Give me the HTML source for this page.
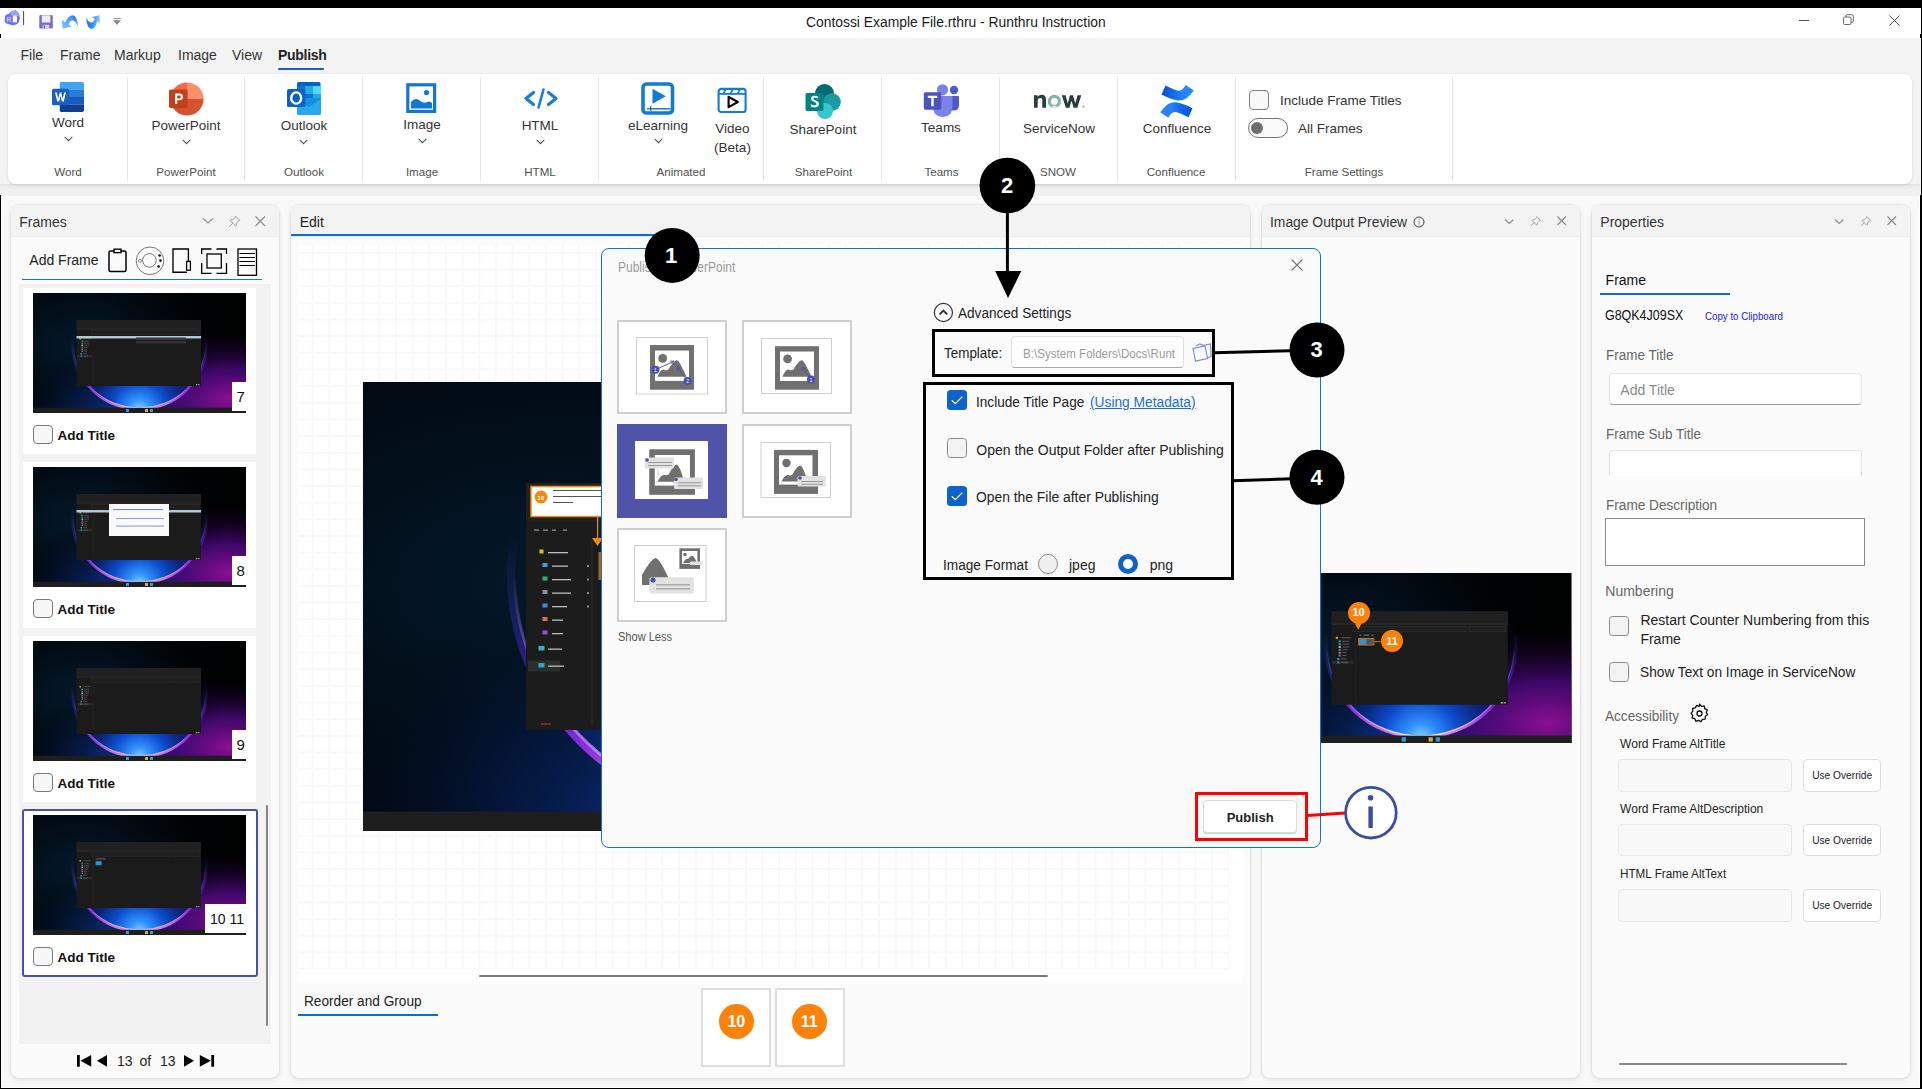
<!DOCTYPE html>
<html><head><meta charset="utf-8">
<style>
*{box-sizing:border-box;margin:0;padding:0}
html,body{width:1922px;height:1089px;overflow:hidden;background:#f9f9f9;font-family:"Liberation Sans",sans-serif;color:#222}
.a{position:absolute}
.t{position:absolute;white-space:nowrap;line-height:1}
svg{position:absolute;overflow:visible}
.panel{position:absolute;background:#fbfbfb;border-radius:8px;box-shadow:0 0 0 0.6px rgba(0,0,0,.06),0 0 4px rgba(0,0,0,.07),0 3px 6px rgba(0,0,0,.06)}
.phdr{position:absolute;left:0;top:0;right:0;height:32px;background:#f3f3f3;border-radius:8px 8px 0 0;border-bottom:1px solid #ebebeb}
.sep{position:absolute;top:77px;width:1px;height:104px;background:#e6e6e6}
.rl{position:absolute;font-size:13.5px;color:#333;white-space:nowrap;line-height:1;text-align:center}
.gl{position:absolute;font-size:11.6px;color:#505050;white-space:nowrap;line-height:1;text-align:center}
.chev{position:absolute;width:7px;height:7px;border-right:1.3px solid #666;border-bottom:1.3px solid #666;transform:rotate(45deg)}
</style></head><body>
<!-- window frame -->
<div class="a" style="left:0;top:0;width:1922px;height:8px;background:#000"></div>
<div class="a" style="left:0;top:8px;width:1922px;height:30px;background:#fff"></div>
<div class="a" style="left:0;top:38px;width:1922px;height:157px;background:#f3f3f3"></div>
<div class="a" style="left:0;top:184px;width:1922px;height:11.5px;background:linear-gradient(#e3e3e3,#ececec 3px,#f0f0f0 6px,#f1f1f1)"></div>
<div class="a" style="left:1px;top:195px;width:1px;height:892px;background:#fff"></div>
<div class="a" style="left:1919px;top:195px;width:1px;height:892px;background:#fff"></div>
<div class="a" style="left:0;top:1087px;width:1922px;height:1px;background:#fff"></div>
<div class="a" style="left:0;top:195px;width:1px;height:894px;background:#000"></div>
<div class="a" style="left:0;top:34px;width:1px;height:4px;background:#000"></div>
<div class="a" style="left:1921px;top:8px;width:1px;height:1081px;background:#000"></div>
<div class="a" style="left:1920px;top:195px;width:1px;height:894px;background:#000"></div>
<div class="a" style="left:1920px;top:34px;width:1px;height:4px;background:#000"></div>
<div class="a" style="left:0;top:1088px;width:1922px;height:1px;background:#000"></div>

<!-- title -->
<div class="t" style="left:806px;top:15px;font-size:14px;color:#1a1a1a;transform:scaleX(0.99);transform-origin:0 0">Contossi Example File.rthru - Runthru Instruction</div>

<!-- menu -->
<div class="t" style="left:20.5px;top:48px;font-size:14px;color:#333">File</div>
<div class="t" style="left:60px;top:48px;font-size:14px;color:#333">Frame</div>
<div class="t" style="left:114px;top:48px;font-size:14px;color:#333">Markup</div>
<div class="t" style="left:178px;top:48px;font-size:14px;color:#333">Image</div>
<div class="t" style="left:232px;top:48px;font-size:14px;color:#333">View</div>
<div class="t" style="left:278px;top:48px;font-size:14px;color:#222;font-weight:bold;letter-spacing:-0.3px">Publish</div>
<div class="a" style="left:278px;top:67.5px;width:46px;height:2.5px;border-radius:2px;background:#1a5fc0"></div>

<!-- ribbon -->
<div class="a" style="left:8px;top:74px;width:1904px;height:110px;background:#fff;border-radius:8px;box-shadow:0 1px 3px rgba(0,0,0,.12)"></div>
<div class="sep" style="left:127px"></div>
<div class="sep" style="left:244px"></div>
<div class="sep" style="left:362px"></div>
<div class="sep" style="left:480px"></div>
<div class="sep" style="left:598px"></div>
<div class="sep" style="left:763px"></div>
<div class="sep" style="left:881px"></div>
<div class="sep" style="left:999px"></div>
<div class="sep" style="left:1117px"></div>
<div class="sep" style="left:1235px"></div>
<div class="sep" style="left:1452px"></div>

<!-- title bar icons -->
<svg style="left:0;top:8px" width="130" height="30" viewBox="0 8 130 30">
  <defs>
   <linearGradient id="ur" x1="0" y1="1" x2="1" y2="0"><stop offset="0" stop-color="#8cc4ff"/><stop offset="0.6" stop-color="#4aa0ff"/><stop offset="1" stop-color="#1a70e0"/></linearGradient>
   <linearGradient id="rr" x1="0" y1="0" x2="1" y2="0"><stop offset="0" stop-color="#1a70e0"/><stop offset="0.5" stop-color="#3a90f8"/><stop offset="1" stop-color="#90c8ff"/></linearGradient>
  </defs>
  <path d="M5 18.5 Q4 14.5 8.5 14 Q10.5 11 15.5 10.2 Q19.5 12.5 19.8 17.5 Q20 23 16 24.6 Q12.5 25.8 10 24.5 Q5.5 24 4.5 21Z" fill="#6c72f6"/>
  <path d="M9.5 14 Q12 11 15.5 10.2 Q18.5 12 19 16 L13 16Z" fill="#9aa2ff"/>
  <text x="6.6" y="21.8" font-size="6.8" font-family="Liberation Sans" font-weight="bold" fill="#c8ccff">R</text>
  <path d="M12.8 15.5 H16 L17 16.6 V22.3 H12.8Z" fill="#fff"/>
  <rect x="23" y="11" width="1.1" height="14" fill="#555"/>
  <rect x="39.3" y="15" width="13.5" height="13.6" rx="1.3" fill="#7a6cc8"/>
  <rect x="41.8" y="15.3" width="8.6" height="7.2" fill="#ececec"/>
  <rect x="42.6" y="24.8" width="6.6" height="3.8" fill="#d8d8d8"/>
  <rect x="43.6" y="25.3" width="1.4" height="3" fill="#6a5cb8"/>
  <path d="M62.5 28.8 L62 19.8 L65.2 22.3 Q68.5 15.3 72.5 15.2 Q77.5 15.5 77.8 26.6 Q75.5 19.5 71.8 20.5 Q69.6 21.2 68.4 24.6 L71.5 26.4Z" fill="url(#ur)"/>
  <path d="M86.2 17.3 Q86.8 29.5 92 28.7 Q95.5 28.3 97.3 21.2 L99.8 23.5 L99.6 14.9 L91.8 17.3 L94.7 18.5 Q93.5 22.3 91.3 22.5 Q88.3 22.6 86.2 17.3Z" fill="url(#rr)"/>
  <rect x="113" y="18" width="7.8" height="0.9" fill="#999"/>
  <path d="M113 20.2 H120.8 L116.9 25Z" fill="#888"/>
</svg>
<!-- window controls -->
<div class="a" style="left:1799px;top:20px;width:10px;height:1px;background:#555"></div>
<svg style="left:1843px;top:14px" width="12" height="12" viewBox="0 0 12 12"><rect x="0.5" y="3" width="7.5" height="7.5" rx="1.2" fill="none" stroke="#666" stroke-width="1"/><path d="M2.8 3 V2.2 Q2.8 0.7 4.3 0.7 H8.8 Q10.3 0.7 10.3 2.2 V6.8 Q10.3 8.2 8.2 8.2" fill="none" stroke="#666" stroke-width="1"/></svg>
<svg style="left:1889px;top:15px" width="11" height="11" viewBox="0 0 11 11"><path d="M0.5 0.5 L10.5 10.5 M10.5 0.5 L0.5 10.5" stroke="#555" stroke-width="1"/></svg>

<!-- Word -->
<svg style="left:52px;top:82px" width="33" height="31" viewBox="0 0 33 31">
  <defs><clipPath id="wc"><rect x="7.5" y="0" width="24.5" height="30" rx="1.8"/></clipPath></defs>
  <g clip-path="url(#wc)">
   <rect x="7.5" y="0" width="25" height="7.6" fill="#41a5ee"/>
   <rect x="7.5" y="7.5" width="25" height="7.6" fill="#2b7cd3"/>
   <rect x="7.5" y="15" width="25" height="7.6" fill="#185abd"/>
   <rect x="7.5" y="22.5" width="25" height="8" fill="#103f91"/>
  </g>
  <rect x="0" y="6.8" width="17" height="16.5" rx="1.6" fill="#1b5fc1"/>
  <path d="M3 10.5 L5.3 19.5 L7.2 19.5 L8.5 13.8 L9.8 19.5 L11.7 19.5 L14 10.5 L12.2 10.5 L10.7 16.8 L9.3 10.5 L7.7 10.5 L6.3 16.8 L4.8 10.5Z" fill="#fff"/>
</svg>
<div class="rl" style="left:38px;top:115.6px;width:60px">Word</div>
<svg style="left:63.5px;top:136.0px" width="9" height="6" viewBox="0 0 9 6"><path d="M0.7 0.8 L4.5 4.6 L8.3 0.8" fill="none" stroke="#555" stroke-width="1.15"/></svg>
<div class="gl" style="left:28px;top:166px;width:80px">Word</div>

<!-- PowerPoint -->
<svg style="left:169px;top:81.5px" width="36" height="34" viewBox="0 0 36 34">
  <path d="M18 17 L18 0.4 A16.6 16.6 0 0 1 34.6 17Z" fill="#ff8f6b"/>
  <path d="M18 17 L18 0.4 A16.6 16.6 0 0 0 1.4 17Z" fill="#ed6c47"/>
  <path d="M1.4 17 A16.6 16.6 0 0 0 34.6 17Z" fill="#d35230"/>
  <rect x="0" y="7.5" width="18.6" height="18.4" rx="1.6" fill="#c43e1c"/>
  <path d="M6 11.5 H10.3 Q14 11.5 14 14.8 Q14 18.3 10.3 18.3 H8.2 V22 H6Z M8.2 13.4 V16.4 H10.2 Q11.8 16.4 11.8 14.9 Q11.8 13.4 10.2 13.4Z" fill="#fff" fill-rule="evenodd"/>
</svg>
<div class="rl" style="left:145px;top:118.5px;width:82px">PowerPoint</div>
<svg style="left:181.5px;top:138.5px" width="9" height="6" viewBox="0 0 9 6"><path d="M0.7 0.8 L4.5 4.6 L8.3 0.8" fill="none" stroke="#555" stroke-width="1.15"/></svg>
<div class="gl" style="left:136px;top:166px;width:100px">PowerPoint</div>

<!-- Outlook -->
<svg style="left:287px;top:82px" width="36" height="34" viewBox="0 0 36 34">
  <rect x="10" y="0" width="23.5" height="9" rx="1.5" fill="#0364b8"/>
  <rect x="10" y="4" width="8" height="8" fill="#0078d4"/>
  <rect x="18" y="4" width="8" height="8" fill="#28a8ea"/>
  <rect x="26" y="4" width="8" height="8" fill="#50d9ff"/>
  <rect x="10" y="12" width="8" height="8" fill="#0364b8"/>
  <rect x="18" y="12" width="8" height="8" fill="#0078d4"/>
  <rect x="26" y="12" width="8" height="8" fill="#28a8ea"/>
  <path d="M10 16 L34 16 L34 31 Q34 33 32 33 L12 33 Q10 33 10 31Z" fill="#1490df"/>
  <path d="M10 17 L22 25 L34 17 L34 31 Q34 33 32 33 L12 33 Q10 33 10 31Z" fill="#28a8ea"/>
  <rect x="0" y="7" width="18.5" height="18" rx="1.6" fill="#0a64bd"/>
  <ellipse cx="9.2" cy="16" rx="5" ry="5.6" fill="none" stroke="#fff" stroke-width="2.4"/>
</svg>
<div class="rl" style="left:263px;top:118.5px;width:82px">Outlook</div>
<svg style="left:299.0px;top:138.5px" width="9" height="6" viewBox="0 0 9 6"><path d="M0.7 0.8 L4.5 4.6 L8.3 0.8" fill="none" stroke="#555" stroke-width="1.15"/></svg>
<div class="gl" style="left:254px;top:166px;width:100px">Outlook</div>

<!-- Image -->
<svg style="left:406px;top:83px" width="32" height="31" viewBox="0 0 32 31">
  <rect x="1.8" y="1.8" width="26.8" height="26.6" fill="none" stroke="#0f78d4" stroke-width="3.2"/>
  <circle cx="20.5" cy="9.5" r="2.6" fill="#0f78d4"/>
  <path d="M5 25.5 L5 19 Q9 14 13 17 Q17 21 21 19 Q24 17.5 26 20 L26 25.5Z" fill="#0f78d4"/>
</svg>
<div class="rl" style="left:381px;top:118px;width:82px">Image</div>
<svg style="left:417.5px;top:137.5px" width="9" height="6" viewBox="0 0 9 6"><path d="M0.7 0.8 L4.5 4.6 L8.3 0.8" fill="none" stroke="#555" stroke-width="1.15"/></svg>
<div class="gl" style="left:372px;top:166px;width:100px">Image</div>

<!-- HTML -->
<svg style="left:524px;top:88px" width="34" height="22" viewBox="0 0 34 22">
  <path d="M9.5 4.5 L2 10.5 L9.5 16.5" fill="none" stroke="#1a7bd8" stroke-width="3.2" stroke-linejoin="round" stroke-linecap="round"/>
  <path d="M24.5 4.5 L32 10.5 L24.5 16.5" fill="none" stroke="#1a7bd8" stroke-width="3.2" stroke-linejoin="round" stroke-linecap="round"/>
  <path d="M19.5 1.5 L14.5 19.5" fill="none" stroke="#1a7bd8" stroke-width="2.6" stroke-linecap="round"/>
</svg>
<div class="rl" style="left:499px;top:119px;width:82px">HTML</div>
<svg style="left:535.5px;top:138.5px" width="9" height="6" viewBox="0 0 9 6"><path d="M0.7 0.8 L4.5 4.6 L8.3 0.8" fill="none" stroke="#555" stroke-width="1.15"/></svg>
<div class="gl" style="left:490px;top:166px;width:100px">HTML</div>

<!-- eLearning -->
<svg style="left:641px;top:82px" width="35" height="34" viewBox="0 0 35 34">
  <rect x="2" y="2" width="29.5" height="29" rx="3.5" fill="none" stroke="#137ad6" stroke-width="3.6"/>
  <path d="M11.5 6.8 L11.5 21.8 L24.8 14.3Z" fill="#137ad6"/>
  <rect x="6" y="26" width="23.5" height="1.5" fill="#137ad6"/>
  <rect x="9" y="24.2" width="1.4" height="5" fill="#137ad6"/>
</svg>
<div class="rl" style="left:617px;top:119px;width:82px">eLearning</div>
<svg style="left:653.5px;top:138.0px" width="9" height="6" viewBox="0 0 9 6"><path d="M0.7 0.8 L4.5 4.6 L8.3 0.8" fill="none" stroke="#555" stroke-width="1.15"/></svg>
<!-- Video -->
<svg style="left:717px;top:87px" width="31" height="27" viewBox="0 0 31 27">
  <rect x="1.6" y="1.9" width="27" height="23.1" rx="2.6" fill="none" stroke="#137ad6" stroke-width="2.1"/>
  <path d="M1.6 6.9 H28.6" stroke="#137ad6" stroke-width="1.8"/>
  <path d="M6.3 6.9 L9 1.9 M13.4 6.9 L16.1 1.9 M20.6 6.9 L23.3 1.9" stroke="#137ad6" stroke-width="1.7"/>
  <path d="M11.6 9.8 L11.6 20.2 L20.9 15Z" fill="none" stroke="#000" stroke-width="2.1" stroke-linejoin="round"/>
</svg>
<div class="t" style="left:712px;top:118.5px;font-size:13.5px;color:#333;line-height:19px;text-align:center;width:41px">Video<br>(Beta)</div>
<div class="gl" style="left:631px;top:166px;width:100px">Animated</div>

<!-- SharePoint -->
<svg style="left:805px;top:84px" width="37" height="36" viewBox="0 0 37 36">
  <circle cx="19.5" cy="9.5" r="9.5" fill="#036c70"/>
  <circle cx="27" cy="18" r="8.8" fill="#1a9ba1"/>
  <circle cx="20" cy="27" r="8" fill="#37c6d0"/>
  <rect x="0.5" y="9" width="18" height="18" rx="1.6" fill="#038387"/>
  <path d="M13.2 12.8 Q11.8 11.8 9.6 11.8 Q6 11.8 6 14.8 Q6 16.8 9 17.8 Q11.5 18.6 11.5 19.9 Q11.5 21.3 9.4 21.3 Q7.2 21.3 5.8 20 V22.6 Q7.2 23.4 9.4 23.4 Q13.9 23.4 13.9 19.8 Q13.9 17.6 10.6 16.6 Q8.4 15.9 8.4 14.7 Q8.4 13.8 9.9 13.8 Q11.8 13.8 13.2 14.8Z" fill="#fff"/>
</svg>
<div class="rl" style="left:772px;top:122.5px;width:102px">SharePoint</div>
<div class="gl" style="left:773.5px;top:166px;width:100px">SharePoint</div>

<!-- Teams -->
<svg style="left:923px;top:84px" width="37" height="34" viewBox="0 0 37 34">
  <circle cx="31" cy="6" r="4.2" fill="#5059c9"/>
  <path d="M26 12 H35 Q36 12 36 13 V21 Q36 26.5 30.5 26.5 Q26 26.5 26 21Z" fill="#5059c9"/>
  <circle cx="19.5" cy="5.8" r="5.6" fill="#7b83eb"/>
  <path d="M10 12 H28 Q29.5 12 29.5 13.5 V22.5 Q29.5 33 19.8 33 Q10 33 10 22.5Z" fill="#7b83eb"/>
  <rect x="0.8" y="8.2" width="17.5" height="17.5" rx="1.6" fill="#4b53bc"/>
  <path d="M4.8 11.8 H14.2 V13.9 H10.7 V22.3 H8.3 V13.9 H4.8Z" fill="#fff"/>
</svg>
<div class="rl" style="left:900px;top:120.5px;width:82px">Teams</div>
<div class="gl" style="left:891.5px;top:166px;width:100px">Teams</div>

<!-- ServiceNow -->
<svg style="left:1033px;top:92px" width="53" height="17" viewBox="0 0 53 17">
  <path d="M1 15.8 V3.2 H4.6 V4.8 Q6.2 2.8 8.8 2.8 Q13 2.8 13 7.6 V15.8 H9.3 V8.3 Q9.3 6 7.3 6 Q4.7 6 4.7 8.8 V15.8Z" fill="#293e40"/>
  <circle cx="21.4" cy="9.4" r="5" fill="none" stroke="#81b5a1" stroke-width="3.3"/>
  <path d="M18 15.5 Q21.4 12 24.8 15.5" fill="#fff"/>
  <path d="M28.8 3.2 H32.5 L34.8 11.3 L37 3.2 H40 L42.3 11.3 L44.6 3.2 H48.3 L44.3 15.8 H40.6 L38.5 8.8 L36.4 15.8 H32.8Z" fill="#293e40"/>
  <circle cx="50.5" cy="14.6" r="1.1" fill="#81b5a1"/>
</svg>
<div class="rl" style="left:1008px;top:121.6px;width:102px">ServiceNow</div>
<div class="gl" style="left:1008px;top:166px;width:100px">SNOW</div>

<!-- Confluence -->
<svg style="left:1159px;top:84px" width="36" height="35" viewBox="0 0 36 35">
  <defs>
   <linearGradient id="cf1" x1="0" y1="0" x2="1" y2="0"><stop offset="0" stop-color="#0050d0"/><stop offset="0.7" stop-color="#2684ff"/></linearGradient>
   <linearGradient id="cf2" x1="1" y1="0" x2="0" y2="0"><stop offset="0" stop-color="#0050d0"/><stop offset="0.7" stop-color="#2684ff"/></linearGradient>
  </defs>
  <path d="M6.5 1.5 L2.5 10.6 Q12 15.5 19.3 16.6 Q24 16.8 27.3 14.6 Q31 11.5 34.8 6.5 L26.7 1.1 Q23.5 6.5 20.5 6.8 Q17.5 7 6.5 1.5Z" fill="url(#cf1)"/>
  <path d="M29.5 33.3 L33.5 24.2 Q24 19.3 16.7 18.2 Q12 18 8.7 20.2 Q5 23.3 1.2 28.3 L9.3 33.7 Q12.5 28.3 15.5 28 Q18.5 27.8 29.5 33.3Z" fill="url(#cf2)"/>
</svg>
<div class="rl" style="left:1126px;top:121.6px;width:102px">Confluence</div>
<div class="gl" style="left:1126px;top:166px;width:100px">Confluence</div>

<!-- Frame settings -->
<div class="a" style="left:1249px;top:90px;width:20px;height:20px;border:1px solid #808080;border-radius:4px;background:#f8f8f8"></div>
<div class="t" style="left:1280px;top:93.6px;font-size:13.5px;color:#333">Include Frame Titles</div>
<div class="a" style="left:1248px;top:118px;width:40px;height:20px;border:1px solid #777;border-radius:10px;background:#fafafa"></div>
<div class="a" style="left:1251px;top:122px;width:12px;height:12px;border-radius:6px;background:#6e6e6e"></div>
<div class="t" style="left:1298px;top:121.6px;font-size:13.5px;color:#333">All Frames</div>
<div class="gl" style="left:1294px;top:166px;width:100px">Frame Settings</div>


<!-- panels -->
<div class="panel" style="left:11px;top:205px;width:268px;height:873px"><div class="phdr"></div></div>
<div class="panel" style="left:291px;top:205px;width:959px;height:873px"><div class="phdr"></div></div>
<div class="panel" style="left:1262px;top:205px;width:318px;height:873px"><div class="phdr"></div></div>
<div class="panel" style="left:1592px;top:205px;width:318px;height:873px"><div class="phdr"></div></div>

<svg width="0" height="0" style="position:absolute">
 <defs>
  <radialGradient id="bgL" cx="0.25" cy="0.45" r="0.7"><stop offset="0" stop-color="#04192a"/><stop offset="0.6" stop-color="#020c16"/><stop offset="1" stop-color="#01060b"/></radialGradient>
  <linearGradient id="darkR" x1="0" y1="0" x2="1" y2="0.2"><stop offset="0.35" stop-color="#000" stop-opacity="0"/><stop offset="0.9" stop-color="#000" stop-opacity="0.9"/></linearGradient>
  <radialGradient id="bgR" cx="0.92" cy="0.88" r="0.6"><stop offset="0" stop-color="#8a1090"/><stop offset="0.4" stop-color="#48087a" stop-opacity="0.85"/><stop offset="1" stop-color="#000" stop-opacity="0"/></radialGradient>
  <radialGradient id="blo" cx="0.5" cy="1" r="0.8"><stop offset="0" stop-color="#80d0ff"/><stop offset="0.1" stop-color="#3090ff"/><stop offset="0.25" stop-color="#0c4ccc"/><stop offset="0.42" stop-color="#08267a" stop-opacity="0.85"/><stop offset="0.7" stop-color="#041434" stop-opacity="0.35"/><stop offset="1" stop-color="#031020" stop-opacity="0"/></radialGradient>
  <linearGradient id="rim" x1="0" y1="0" x2="0" y2="1"><stop offset="0.42" stop-color="#2a40c0" stop-opacity="0"/><stop offset="0.68" stop-color="#5028e0" stop-opacity="0.55"/><stop offset="0.86" stop-color="#9a30f0"/><stop offset="1" stop-color="#ff90e0"/></linearGradient><linearGradient id="rim2" x1="0" y1="0" x2="0" y2="1"><stop offset="0.5" stop-color="#fff" stop-opacity="0"/><stop offset="0.85" stop-color="#e0a0ff" stop-opacity="0.6"/><stop offset="1" stop-color="#fff0ff"/></linearGradient><radialGradient id="bgB" cx="0.5" cy="1" r="0.6"><stop offset="0.2" stop-color="#0c3aa0" stop-opacity="0.8"/><stop offset="0.6" stop-color="#062060" stop-opacity="0.4"/><stop offset="1" stop-color="#000" stop-opacity="0"/></radialGradient>
  <symbol id="thumb" viewBox="0 0 213 120" preserveAspectRatio="none">
   <rect width="213" height="120" fill="url(#bgL)"/>
   <rect width="213" height="120" fill="url(#darkR)"/>
   <rect width="213" height="120" fill="url(#bgB)"/>
   <rect width="213" height="120" fill="url(#bgR)"/>
   <ellipse cx="106.5" cy="51.5" rx="67" ry="64.5" fill="url(#blo)"/>
   <ellipse cx="106.5" cy="51.5" rx="67" ry="64.5" fill="none" stroke="url(#rim)" stroke-width="2.2" opacity="0.9"/>
   <ellipse cx="106.5" cy="51.5" rx="66" ry="63.5" fill="none" stroke="url(#rim2)" stroke-width="0.8"/>
   <rect x="43.5" y="27" width="124.5" height="66" fill="#1b1b1b"/>
   <rect x="43.5" y="27" width="124.5" height="9" fill="#202020"/>
   <rect x="43.5" y="35.8" width="124.5" height="0.5" fill="#3a3a3a"/>
   <rect x="58.5" y="37.6" width="80" height="3.6" fill="#1f1f1f" stroke="#333" stroke-width="0.4"/>
   <rect x="140.5" y="37.6" width="26" height="3.6" fill="#1f1f1f" stroke="#333" stroke-width="0.4"/>
   <rect x="60" y="43" width="0.4" height="48" fill="#2a2a2a"/>
   <g opacity="0.85"><rect x="46.5" y="45" width="1.5" height="1.5" fill="#e8b820"/><rect x="48.5" y="47.5" width="1.5" height="1.5" fill="#3aa0e0"/><rect x="48.5" y="49.5" width="1.5" height="1.5" fill="#30b070"/><rect x="48.5" y="51.5" width="1.5" height="1.5" fill="#ccc"/><rect x="48.5" y="53.5" width="1.5" height="1.5" fill="#3a90e0"/><rect x="48.5" y="55.5" width="1.5" height="1.5" fill="#e07060"/><rect x="48.5" y="57.5" width="1.5" height="1.5" fill="#a060e0"/><rect x="47.5" y="60" width="1.5" height="1.5" fill="#30b0e0"/><rect x="44" y="62" width="15" height="2.4" fill="#2c2c2c"/><rect x="47.5" y="62.4" width="1.5" height="1.5" fill="#30a0d0"/></g>
   <g fill="#6a6a6a" opacity="0.7"><rect x="50.5" y="45.3" width="7" height="0.8"/><rect x="51" y="47.8" width="5" height="0.8"/><rect x="51" y="49.8" width="5" height="0.8"/><rect x="51" y="51.8" width="5" height="0.8"/><rect x="51" y="53.8" width="4" height="0.8"/><rect x="51" y="55.8" width="3" height="0.8"/><rect x="51" y="57.8" width="3" height="0.8"/><rect x="50" y="60.3" width="4" height="0.8"/><rect x="50" y="62.7" width="5" height="0.8"/></g>
   <rect x="165" y="91" width="1.6" height="1.2" fill="#888"/><rect x="163" y="91" width="1.4" height="1.2" fill="#aaa"/>
   <rect x="0" y="114.8" width="213" height="5.2" fill="#1e1e1e"/>
   <rect x="93" y="116" width="3" height="3" fill="#2a9af0"/><rect x="112" y="116" width="3" height="3" fill="#d0b040"/><rect x="117" y="116" width="3" height="3" fill="#30a0d0"/>
  </symbol>
 </defs>
</svg>
<!-- Frames header -->
<div class="t" style="left:19.3px;top:215.4px;font-size:14px;color:#333">Frames</div>
<svg style="left:202px;top:217px" width="12" height="8" viewBox="0 0 12 8"><path d="M1 1.5 L6 6 L11 1.5" fill="none" stroke="#8a8a8a" stroke-width="1.1"/></svg>
<svg style="left:228px;top:215px" width="13" height="13" viewBox="0 0 13 13"><path d="M7.5 1.2 L11.8 5.5 L10.6 6 L8.2 8.4 L8.3 10.4 L7.5 11 L2 5.5 L2.6 4.7 L4.6 4.8 L7 2.4Z M4.8 8.2 L1.3 11.7" fill="none" stroke="#9a9a9a" stroke-width="1"/></svg>
<svg style="left:255px;top:216px" width="11" height="11" viewBox="0 0 11 11"><path d="M0.5 0.5 L10 10 M10 0.5 L0.5 10" stroke="#8a8a8a" stroke-width="1.1"/></svg>
<!-- add frame row -->
<div class="t" style="left:29.3px;top:253px;font-size:14px;color:#222">Add Frame</div>
<svg style="left:100px;top:240px" width="170" height="45" viewBox="100 240 170 45">
 <rect x="109" y="251" width="17" height="20.5" rx="1.6" fill="none" stroke="#000" stroke-width="1.5"/>
 <rect x="114" y="249.2" width="7" height="3.4" fill="#fff" stroke="#000" stroke-width="1.4"/>
 <circle cx="150" cy="260.8" r="13.8" fill="none" stroke="#777" stroke-width="1"/>
 <circle cx="149.4" cy="260.4" r="6.8" fill="none" stroke="#777" stroke-width="1"/>
 <circle cx="140" cy="260.8" r="1.5" fill="none" stroke="#777" stroke-width="0.9"/>
 <circle cx="159.6" cy="255.5" r="1.3" fill="#111"/><circle cx="160.5" cy="260.6" r="1.3" fill="#111"/><circle cx="158.6" cy="266.5" r="1.3" fill="#111"/>
 <path d="M188.4 261.5 V249 H173 V272.2 H187" fill="none" stroke="#000" stroke-width="1.35"/>
 <rect x="186.6" y="261.4" width="3.8" height="8.8" fill="#fff" stroke="#000" stroke-width="1.3"/>
 <path d="M201.7 254 V249 H211.5 M216.5 249 H226.5 V254 M226.5 263 V273.3 H216.5 M211.5 273.3 H201.7 V263" fill="none" stroke="#000" stroke-width="1.3"/>
 <rect x="207" y="254" width="14.3" height="14" fill="none" stroke="#000" stroke-width="1.3"/>
 <rect x="238" y="249" width="18.5" height="26.3" fill="none" stroke="#000" stroke-width="1.3"/>
 <path d="M239.5 253.5 H255 M239.5 257.5 H255 M239.5 261.5 H255 M239.5 265.5 H255" stroke="#000" stroke-width="1.1"/>
</svg>
<div class="a" style="left:22px;top:278.6px;width:240px;height:1.6px;background:#1a73d0"></div>
<!-- list area -->
<div class="a" style="left:19px;top:284px;width:252px;height:760px;background:#f2f2f2"></div>
<div class="a" style="left:23px;top:288px;width:233px;height:166px;background:#fff"></div>
<div class="a" style="left:23px;top:462px;width:233px;height:166px;background:#fff"></div>
<div class="a" style="left:23px;top:636px;width:233px;height:166px;background:#fff"></div>
<div class="a" style="left:22px;top:809px;width:235.5px;height:168px;background:#fff;border:2px solid #4a4fa8;border-radius:3px"></div>
<svg style="left:33px;top:293px" width="213" height="120"><use href="#thumb"/></svg>
<svg style="left:33px;top:467px" width="213" height="120"><use href="#thumb"/><rect x="43.5" y="43" width="124.5" height="2.5" fill="#b0c8d8"/><rect x="76" y="37" width="60" height="32" fill="#fafafa"/><rect x="80" y="42" width="50" height="1.1" fill="#6a8ad0"/><rect x="83" y="51" width="48" height="1.1" fill="#8aa0d8"/><rect x="83" y="58.5" width="48" height="1.1" fill="#8aa0d8"/></svg>
<svg style="left:33px;top:641px" width="213" height="120"><use href="#thumb"/></svg>
<svg style="left:33px;top:815px" width="213" height="120"><use href="#thumb"/><rect x="62.6" y="46.2" width="6" height="4" fill="#2a90d8"/><rect x="62.6" y="43.5" width="10" height="0.8" fill="#777"/></svg>
<svg style="left:33px;top:293px" width="213" height="120"><rect x="43.5" y="43" width="124.5" height="2.5" fill="#b0c8d8"/><rect x="103" y="44.5" width="50" height="2.5" fill="#3a3a3a"/><rect x="103" y="48" width="50" height="2.5" fill="#333"/></svg>
<div class="a" style="left:232px;top:382px;width:14px;height:29px;background:#fff"></div>
<div class="t" style="left:236.5px;top:388.8px;font-size:15px;color:#111">7</div>
<div class="a" style="left:232px;top:556px;width:14px;height:29px;background:#fff"></div>
<div class="t" style="left:236.5px;top:562.8px;font-size:15px;color:#111">8</div>
<div class="a" style="left:232px;top:730px;width:14px;height:29px;background:#fff"></div>
<div class="t" style="left:236.5px;top:736.8px;font-size:15px;color:#111">9</div>
<div class="a" style="left:205px;top:904px;width:41px;height:29px;background:#fff"></div>
<div class="t" style="left:210px;top:912px;font-size:14px;color:#111">10 11</div>
<!-- checkboxes / titles -->
<div class="a" style="left:33px;top:424.5px;width:20px;height:19.5px;border:1px solid #7a7a7a;border-radius:4px;background:#f7f7f7"></div>
<div class="t" style="left:57.5px;top:428.8px;font-size:13.5px;color:#111;font-weight:bold">Add Title</div>
<div class="a" style="left:33px;top:598.5px;width:20px;height:19.5px;border:1px solid #7a7a7a;border-radius:4px;background:#f7f7f7"></div>
<div class="t" style="left:57.5px;top:602.8px;font-size:13.5px;color:#111;font-weight:bold">Add Title</div>
<div class="a" style="left:33px;top:772.5px;width:20px;height:19.5px;border:1px solid #7a7a7a;border-radius:4px;background:#f7f7f7"></div>
<div class="t" style="left:57.5px;top:776.8px;font-size:13.5px;color:#111;font-weight:bold">Add Title</div>
<div class="a" style="left:33px;top:946.5px;width:20px;height:19.5px;border:1px solid #7a7a7a;border-radius:4px;background:#f7f7f7"></div>
<div class="t" style="left:57.5px;top:950.8px;font-size:13.5px;color:#111;font-weight:bold">Add Title</div>
<div class="a" style="left:266px;top:805px;width:2.2px;height:221px;background:#858585;border-radius:1px"></div>
<!-- pager -->
<svg style="left:76px;top:1054px" width="140" height="14" viewBox="76 1054 140 14">
 <rect x="77" y="1055" width="2.8" height="11.7" fill="#000"/><path d="M91.2 1055 V1066.7 L80.5 1060.8Z" fill="#000"/>
 <path d="M107 1055 V1066.7 L97 1060.8Z" fill="#000"/>
 <path d="M184 1055 V1066.7 L194 1060.8Z" fill="#000"/>
 <path d="M199.8 1055 V1066.7 L210.8 1060.8Z" fill="#000"/><rect x="211.3" y="1055" width="2.8" height="11.7" fill="#000"/>
</svg>
<div class="t" style="left:117px;top:1054.2px;font-size:14px;color:#222">13</div>
<div class="t" style="left:139.5px;top:1054.2px;font-size:14px;color:#222">of</div>
<div class="t" style="left:160px;top:1054.2px;font-size:14px;color:#222">13</div>

<!-- FRAMES_CONTENT -->
<!-- Edit panel -->
<div class="t" style="left:299.7px;top:215.2px;font-size:14px;color:#222">Edit</div>
<div class="a" style="left:291px;top:234px;width:370px;height:2.2px;background:#0f6cd0"></div>
<div class="a" style="left:298px;top:245px;width:945px;height:737.6px;background:#fff"></div><div class="a" style="left:298px;top:245px;width:931px;height:724px;background-image:linear-gradient(90deg,transparent 14px,#f8f8f8 14px,#f8f8f8 15.7px,transparent 15.7px),linear-gradient(transparent 7px,#f8f8f8 7px,#f8f8f8 8.7px,transparent 8.7px);background-size:16.67px 16.67px,16.67px 16.67px"></div>
<svg style="left:363px;top:382px" width="798" height="449"><use href="#thumb"/></svg>
<!-- edit image overlay details -->
<svg style="left:363px;top:382px" width="240" height="449" viewBox="363 382 240 449">
 <rect x="526.5" y="483.5" width="80" height="246.5" fill="#1c1c1c"/>
 <rect x="526.5" y="483.5" width="80" height="38" fill="#202020"/>
 <rect x="591.5" y="540" width="1" height="185" fill="#2e2e2e"/>
 <rect x="528" y="660.5" width="32" height="11" fill="#2d2d2d"/>
 <g fill="#9a9a9a"><rect x="534" y="529.5" width="5" height="1.2"/><rect x="543" y="529.5" width="5" height="1.2"/><rect x="552" y="529.5" width="4" height="1.2"/><rect x="563" y="529.5" width="4" height="1.2"/></g>
 <g fill="#bdbdbd"><rect x="548" y="552" width="20" height="1.3"/><rect x="552" y="565.5" width="16" height="1.3"/><rect x="552" y="579" width="19" height="1.3"/><rect x="552" y="592.5" width="19" height="1.3"/><rect x="552" y="606" width="15" height="1.3"/><rect x="552" y="619.5" width="11" height="1.3"/><rect x="552" y="633" width="11" height="1.3"/><rect x="548" y="648.5" width="14" height="1.3"/><rect x="548" y="665.5" width="16" height="1.3"/></g>
 <g><rect x="539.5" y="549.5" width="4" height="4" fill="#e8b820"/><rect x="542.5" y="563" width="5" height="4" fill="#3aa0e0"/><rect x="542.5" y="576.5" width="5" height="4" fill="#30b070"/><rect x="542.5" y="590" width="5" height="4" fill="#8a8a9a"/><rect x="542.5" y="603.5" width="5" height="4" fill="#3a90e0"/><rect x="542.5" y="617" width="5" height="4" fill="#e07050"/><rect x="542.5" y="630.5" width="5" height="4" fill="#9050e0"/><rect x="538.5" y="646" width="6" height="4.5" fill="#30b0e0"/><rect x="538.5" y="663" width="6" height="4.5" fill="#30a0d0"/></g>
 <g fill="#888"><rect x="587" y="565" width="2" height="2"/><rect x="587" y="578.5" width="2" height="2"/><rect x="587" y="592" width="2" height="2"/><rect x="587" y="605.5" width="2" height="2"/></g>
 <rect x="531" y="486.5" width="75" height="30" fill="#fff" stroke="#f08a10" stroke-width="1.5"/>
 <circle cx="541" cy="497" r="6.5" fill="#f08a10"/>
 <text x="537.3" y="499.5" font-size="6" font-family="Liberation Sans" font-weight="bold" fill="#fff">10</text>
 <g fill="#555"><rect x="553" y="490" width="48" height="1"/><rect x="553" y="496" width="48" height="1"/><rect x="553" y="502" width="20" height="1"/></g>
 <rect x="597" y="517" width="1.2" height="22" fill="#f08a10"/>
 <path d="M592 538 L603 538 L597.5 546Z" fill="#f08a10"/>
 <rect x="598.5" y="552" width="3" height="28" fill="#f08a10" opacity="0.7"/>
 <rect x="541" y="723.5" width="10" height="1" fill="#c04040"/>
</svg>
<div class="a" style="left:479px;top:974.8px;width:568.5px;height:2.2px;background:#7a7a7a;border-radius:1px"></div>
<div class="t" style="left:303.5px;top:994.2px;font-size:14px;color:#222;transform:scaleX(0.975);transform-origin:0 0">Reorder and Group</div>
<div class="a" style="left:298px;top:1014px;width:140px;height:2px;background:#0f6cd0"></div>
<div class="a" style="left:700.5px;top:987.5px;width:70px;height:79px;background:#fff;border:2px solid #dedede"></div>
<div class="a" style="left:774.5px;top:987.5px;width:70.5px;height:79px;background:#fff;border:2px solid #dedede"></div>
<div class="a" style="left:718.5px;top:1003.8px;width:35.6px;height:35.6px;border-radius:50%;background:#fd820a"></div>
<div class="a" style="left:791.5px;top:1003.8px;width:35.6px;height:35.6px;border-radius:50%;background:#fd820a"></div>
<div class="t" style="left:718.5px;top:1013.6px;width:35.6px;text-align:center;font-size:16px;font-weight:bold;color:#fff;letter-spacing:0">10</div>
<div class="t" style="left:791.5px;top:1013.6px;width:35.6px;text-align:center;font-size:16px;font-weight:bold;color:#fff;letter-spacing:0">11</div>

<!-- EDIT_CONTENT -->
<!-- PREVIEW_CONTENT -->
<!-- Image Output Preview -->
<div class="t" style="left:1270.3px;top:215.4px;font-size:14px;color:#333;transform:scaleX(0.99);transform-origin:0 0">Image Output Preview</div>
<svg style="left:1412px;top:215px" width="14" height="14" viewBox="0 0 14 14"><circle cx="7" cy="7" r="5" fill="none" stroke="#444" stroke-width="1"/><rect x="6.5" y="6" width="1.1" height="3.6" fill="#999"/><rect x="6.5" y="4.2" width="1.1" height="1" fill="#999"/></svg>
<svg style="left:1504px;top:217.5px" width="11" height="7" viewBox="0 0 11 7"><path d="M1 1.5 L5.2 5.5 L9.4 1.5" fill="none" stroke="#8a8a8a" stroke-width="1.1"/></svg>
<svg style="left:1529.5px;top:215.5px" width="12" height="10" viewBox="0 0 12 10"><path d="M6.8 0.6 L10.6 4.4 L9.6 4.8 L7.4 7 L7.5 8.7 L6.8 9.3 L2 4.5 L2.6 3.8 L4.3 3.9 L6.5 1.7Z M4.2 6.8 L1 9.8" fill="none" stroke="#9a9a9a" stroke-width="0.9"/></svg>
<svg style="left:1556.5px;top:216px" width="10" height="10" viewBox="0 0 10 10"><path d="M0.5 0.5 L9 9 M9 0.5 L0.5 9" stroke="#8a8a8a" stroke-width="1.1"/></svg>
<svg style="left:1270.4px;top:573px" width="301.6" height="170"><use href="#thumb"/></svg>
<svg style="left:1270.4px;top:573px" width="302" height="170" viewBox="0 0 213 120" preserveAspectRatio="none">
 <rect x="62.6" y="46.2" width="10.6" height="4.6" fill="#2a90d8" stroke="#e07a10" stroke-width="0.7"/>
 <rect x="68" y="46.5" width="5" height="4" fill="#555"/>
 <path d="M73.2 48.5 H80" stroke="#e07a10" stroke-width="0.7"/>
 <rect x="61.9" y="30" width="0.7" height="6" fill="#f7850e"/>
 <path d="M59.8 35.5 L64.7 35.5 L62.25 40Z" fill="#f7850e"/>
 <g fill="#777"><rect x="63" y="43.5" width="1.5" height="0.8"/><rect x="66" y="43.5" width="4" height="0.8"/><rect x="71.5" y="43.5" width="1.5" height="0.8"/></g>
</svg>
<div class="a" style="left:1347.5px;top:601.5px;width:22px;height:22px;border-radius:50%;background:#fd820a"></div>
<div class="t" style="left:1347.5px;top:607px;width:22px;text-align:center;font-size:11px;font-weight:bold;color:#fff">10</div>
<div class="a" style="left:1381px;top:630px;width:22px;height:22px;border-radius:50%;background:#fd820a"></div>
<div class="t" style="left:1381px;top:635.6px;width:22px;text-align:center;font-size:11px;font-weight:bold;color:#fff">11</div>

<!-- Properties -->
<div class="t" style="left:1600.3px;top:215.4px;font-size:14px;color:#333">Properties</div>
<svg style="left:1834px;top:217.5px" width="11" height="7" viewBox="0 0 11 7"><path d="M1 1.5 L5.2 5.5 L9.4 1.5" fill="none" stroke="#8a8a8a" stroke-width="1.1"/></svg>
<svg style="left:1860px;top:215.5px" width="12" height="10" viewBox="0 0 12 10"><path d="M6.8 0.6 L10.6 4.4 L9.6 4.8 L7.4 7 L7.5 8.7 L6.8 9.3 L2 4.5 L2.6 3.8 L4.3 3.9 L6.5 1.7Z M4.2 6.8 L1 9.8" fill="none" stroke="#9a9a9a" stroke-width="0.9"/></svg>
<svg style="left:1886.5px;top:216px" width="10" height="10" viewBox="0 0 10 10"><path d="M0.5 0.5 L9 9 M9 0.5 L0.5 9" stroke="#8a8a8a" stroke-width="1.1"/></svg>
<div class="t" style="left:1605.6px;top:273.4px;font-size:14px;color:#111">Frame</div>
<div class="a" style="left:1600px;top:292.8px;width:130px;height:2.2px;background:#0f6cd0"></div>
<div class="t" style="left:1605.3px;top:308.4px;font-size:14px;color:#111;transform:scaleX(0.89);transform-origin:0 0">G8QK4J09SX</div>
<div class="t" style="left:1704.8px;top:311px;font-size:10.8px;color:#1a22e8;transform:scaleX(0.9);transform-origin:0 0">Copy to Clipboard</div>
<div class="t" style="left:1605.5px;top:348.3px;font-size:14px;color:#666;transform:scaleX(0.964);transform-origin:0 0">Frame Title</div>
<div class="a" style="left:1608.5px;top:372.6px;width:253px;height:32px;background:#fff;border:1px solid #e3e3e3;border-bottom:1px solid #9a9a9a;border-radius:4px"></div>
<div class="t" style="left:1620.3px;top:382.5px;font-size:14px;color:#8a8a8a">Add Title</div>
<div class="t" style="left:1605.5px;top:427.2px;font-size:14px;color:#666;transform:scaleX(0.96);transform-origin:0 0">Frame Sub Title</div>
<div class="a" style="left:1608.5px;top:450.2px;width:253px;height:25.6px;background:#fff;border:1px solid #e3e3e3;border-bottom:none;border-radius:4px 4px 0 0"></div>
<div class="t" style="left:1605.5px;top:497.8px;font-size:14px;color:#666;transform:scaleX(0.972);transform-origin:0 0">Frame Description</div>
<div class="a" style="left:1605px;top:518.4px;width:260px;height:47.6px;background:#fff;border:1px solid #8a8a8a"></div>
<div class="t" style="left:1605.3px;top:583.9px;font-size:14px;color:#666">Numbering</div>
<div class="a" style="left:1609px;top:616.2px;width:20px;height:19.6px;background:#f3f3f3;border:1px solid #8a8a8a;border-radius:3.5px"></div>
<div class="t" style="left:1640.4px;top:611.2px;font-size:14px;color:#222;line-height:18.9px">Restart Counter Numbering from this<br>Frame</div>
<div class="a" style="left:1609px;top:662.2px;width:20px;height:19.4px;background:#f3f3f3;border:1px solid #8a8a8a;border-radius:3.5px"></div>
<div class="t" style="left:1640.4px;top:664.8px;font-size:14px;color:#222;transform:scaleX(0.979);transform-origin:0 0">Show Text on Image in ServiceNow</div>
<div class="t" style="left:1605.3px;top:708.8px;font-size:14px;color:#666;transform:scaleX(0.97);transform-origin:0 0">Accessibility</div>
<svg style="left:1689px;top:703px" width="21" height="21" viewBox="0 0 21 21">
 <path d="M10.6 1.2 L12.4 3.3 L15.2 2.9 L15.7 5.6 L18.3 6.9 L17.2 9.4 L18.6 11.8 L16.3 13.3 L16.2 16.1 L13.5 16.3 L11.9 18.6 L9.5 17.3 L6.9 18.3 L5.8 15.7 L3.1 15 L3.7 12.3 L2 10.1 L3.9 8.1 L3.6 5.4 L6.3 4.8 L7.7 2.4 L10.1 3.5Z" fill="none" stroke="#111" stroke-width="1.3" stroke-linejoin="round"/>
 <circle cx="10.5" cy="10.5" r="2.5" fill="none" stroke="#111" stroke-width="1.3"/>
</svg>
<div class="t" style="left:1620.1px;top:738.3px;font-size:12px;color:#222">Word Frame AltTitle</div>
<div class="a" style="left:1618.2px;top:759.2px;width:173.5px;height:32.6px;background:#f8f8f8;border:1px solid #e6e6e6;border-radius:4px"></div>
<div class="a" style="left:1802.8px;top:759.2px;width:78.7px;height:32.6px;background:#fff;border:1px solid #dedede;border-radius:4px"></div>
<div class="t" style="left:1802.8px;top:771px;width:78.7px;text-align:center;font-size:10.2px;color:#222">Use Override</div>
<div class="t" style="left:1620.1px;top:803.4px;font-size:12px;color:#222">Word Frame AltDescription</div>
<div class="a" style="left:1618.2px;top:824.3px;width:173.5px;height:32.1px;background:#f8f8f8;border:1px solid #e6e6e6;border-radius:4px"></div>
<div class="a" style="left:1802.8px;top:824.3px;width:78.7px;height:32.1px;background:#fff;border:1px solid #dedede;border-radius:4px"></div>
<div class="t" style="left:1802.8px;top:836px;width:78.7px;text-align:center;font-size:10.2px;color:#222">Use Override</div>
<div class="t" style="left:1620.1px;top:868.1px;font-size:12px;color:#222;transform:scaleX(0.975);transform-origin:0 0">HTML Frame AltText</div>
<div class="a" style="left:1618.2px;top:889.4px;width:173.5px;height:32.6px;background:#f8f8f8;border:1px solid #e6e6e6;border-radius:4px"></div>
<div class="a" style="left:1802.8px;top:889.4px;width:78.7px;height:32.6px;background:#fff;border:1px solid #dedede;border-radius:4px"></div>
<div class="t" style="left:1802.8px;top:901px;width:78.7px;text-align:center;font-size:10.2px;color:#222">Use Override</div>
<div class="a" style="left:1619px;top:1063px;width:228px;height:2px;background:#8a8a8a;border-radius:1px"></div>

<!-- PROPS_CONTENT -->
<!-- Dialog -->
<div class="a" style="left:601px;top:248px;width:720px;height:599.5px;background:#fafafa;border:1.3px solid #0676d2;border-radius:8px"></div>
<div class="t" style="left:618.3px;top:260px;font-size:14px;color:#9a9a9a;transform:scaleX(0.857);transform-origin:0 0">Publish to PowerPoint</div>
<svg style="left:1290px;top:258px" width="14" height="14" viewBox="0 0 14 14"><path d="M1.5 1.5 L12.5 12.5 M12.5 1.5 L1.5 12.5" stroke="#777" stroke-width="1.1"/></svg>
<!-- tiles -->
<div class="a" style="left:617px;top:320px;width:110px;height:94px;background:#fff;border:2px solid #cfcfcf"></div>
<div class="a" style="left:742.3px;top:320px;width:109.5px;height:94px;background:#fff;border:2px solid #cfcfcf"></div>
<div class="a" style="left:617px;top:424px;width:110px;height:94px;background:#5054a8"></div>
<div class="a" style="left:742.3px;top:424px;width:109.5px;height:94px;background:#fff;border:2px solid #cfcfcf"></div>
<div class="a" style="left:617px;top:528.4px;width:110px;height:93.5px;background:#fff;border:2px solid #cfcfcf"></div>
<svg style="left:610px;top:320px" width="250" height="305" viewBox="610 320 250 305">
 <g fill="none" stroke="#cfcfcf" stroke-width="1">
  <rect x="636.5" y="337.5" width="71" height="56.5"/>
  <rect x="761.5" y="338.5" width="70" height="55"/>
  <rect x="761" y="442.5" width="69.5" height="55"/>
  <rect x="634.5" y="545.5" width="71.5" height="56"/>
 </g>
 <rect x="635" y="441" width="73" height="58" fill="#fff"/>
 <!-- tile1 picture -->
 <rect x="650" y="345" width="44" height="44.7" fill="#707070"/>
 <rect x="655" y="350.6" width="34" height="30.3" fill="#fff"/>
 <circle cx="662.7" cy="358.4" r="4.4" fill="#707070"/>
 <path d="M657.5 376.8 Q661 368.5 664 369.8 Q666.5 371 668.5 369.5 Q673 361 677 360 Q680 362 686.5 376.8Z" fill="#707070"/>
 <path d="M656 369.5 L673.5 361.5 M674 361 L670 361.2 M674 361 L671.5 364" stroke="#4a4fb0" stroke-width="0.9" fill="none"/>
 <path d="M687 380 L677.5 367.5 M677.2 367 L677.5 370.8 M677.2 367 L680.5 368.6" stroke="#4a4fb0" stroke-width="0.9" fill="none"/>
 <circle cx="655.5" cy="369.8" r="4" fill="#4a4fb0"/><circle cx="687.7" cy="380.9" r="4" fill="#4a4fb0"/>
 <text x="654" y="372" font-size="5" font-family="Liberation Sans" fill="#fff">1</text><text x="686.2" y="383" font-size="5" font-family="Liberation Sans" fill="#fff">2</text>
 <!-- tile2 picture -->
 <rect x="775" y="346.2" width="44" height="43.5" fill="#707070"/>
 <rect x="780" y="351.5" width="34" height="29.5" fill="#fff"/>
 <circle cx="787.6" cy="358.8" r="4.4" fill="#707070"/>
 <path d="M782.5 376.8 Q786 368.5 789 369.8 Q791.5 371 793.5 369.5 Q798 361 802 360 Q805 362 811.5 376.8Z" fill="#707070"/>
 <path d="M811 379.5 L802.5 367.5 M802.2 367 L802.5 370.8 M802.2 367 L805.5 368.6" stroke="#4a4fb0" stroke-width="0.9" fill="none"/>
 <circle cx="811" cy="379.6" r="4" fill="#4a4fb0"/><text x="809.6" y="381.6" font-size="5" font-family="Liberation Sans" fill="#fff">1</text>
 <!-- tile3 -->
 <rect x="649.2" y="449.3" width="45.7" height="45.5" fill="#707070"/>
 <rect x="654.8" y="455" width="35.2" height="30.6" fill="#fff"/>
 <path d="M657.5 481.8 Q661 474 664.5 475 Q667 476 669 474 Q673 465 677 464.5 Q680 466 684 481.8Z" fill="#707070"/>
 <rect x="644.7" y="457.6" width="29.3" height="11" rx="1.5" fill="#e2e2e2"/>
 <rect x="648" y="462" width="24" height="0.7" fill="#777"/><rect x="648" y="465.2" width="24" height="0.7" fill="#777"/>
 <circle cx="647" cy="460" r="1.8" fill="#4a4fb0"/>
 <rect x="674" y="477.5" width="29" height="11.4" rx="1.5" fill="#e2e2e2"/>
 <rect x="678" y="482.5" width="23" height="0.7" fill="#777"/><rect x="678" y="485.5" width="23" height="0.7" fill="#777"/>
 <circle cx="676" cy="479.5" r="1.8" fill="#4a4fb0"/>
 <path d="M658 469 V476" stroke="#aaa" stroke-width="0.6"/>
 <!-- tile4 -->
 <rect x="774" y="449.9" width="44" height="44" fill="#707070"/>
 <rect x="779" y="455.3" width="33.5" height="29.3" fill="#fff"/>
 <circle cx="786.5" cy="463" r="4.2" fill="#707070"/>
 <path d="M781.5 481.5 Q785 474 788 475 Q790.5 476 792.5 474.5 Q796.5 466 800.5 465.5 Q803.5 467 807.5 481.5Z" fill="#707070"/>
 <rect x="797.5" y="476" width="28.2" height="10.5" rx="1.5" fill="#e2e2e2"/>
 <rect x="801" y="481" width="22" height="0.7" fill="#777"/><rect x="801" y="483.8" width="22" height="0.7" fill="#777"/>
 <circle cx="800" cy="478" r="1.8" fill="#4a4fb0"/>
 <!-- tile5 -->
 <path d="M642 585 V575 Q650 560 655.5 558 Q660 559 668 577 L668 585Z" fill="#707070"/>
 <rect x="679.4" y="548.3" width="20.6" height="20.6" fill="#707070"/>
 <rect x="682" y="551" width="15.4" height="13" fill="#fff"/>
 <circle cx="685" cy="554.5" r="1.8" fill="#707070"/>
 <path d="M683 563 Q686 558 688 559 Q691 555 693 556 Q695 558 697 563Z" fill="#707070"/>
 <rect x="690" y="561.5" width="13" height="3.5" rx="0.8" fill="#e2e2e2"/>
 <rect x="649.5" y="577.2" width="44.4" height="16.4" rx="2" fill="#e2e2e2"/>
 <rect x="656" y="584.5" width="34" height="0.8" fill="#777"/><rect x="656" y="588.5" width="34" height="0.8" fill="#777"/>
 <circle cx="653" cy="580" r="2.6" fill="#4a4fb0"/>
</svg>
<div class="t" style="left:618.2px;top:631px;font-size:12px;color:#555;transform:scaleX(0.92);transform-origin:0 0">Show Less</div>

<!-- advanced settings -->
<svg style="left:933px;top:302px" width="21" height="21" viewBox="0 0 21 21"><circle cx="10.4" cy="10.5" r="9.1" fill="none" stroke="#333" stroke-width="1.2"/><path d="M6.6 12.3 L10.4 8.5 L14.2 12.3" fill="none" stroke="#333" stroke-width="1.9"/></svg>
<div class="t" style="left:957.8px;top:306.3px;font-size:14px;color:#222;transform:scaleX(0.97);transform-origin:0 0">Advanced Settings</div>
<div class="a" style="left:932px;top:329px;width:283px;height:48px;border:3px solid #000"></div>
<div class="t" style="left:943.7px;top:345.9px;font-size:14px;color:#222;transform:scaleX(0.96);transform-origin:0 0">Template:</div>
<div class="a" style="left:1010.5px;top:336.4px;width:173px;height:31.2px;background:#fff;border:1px solid #e0e0e0;border-bottom:1px solid #aaa;border-radius:4px"></div>
<div class="t" style="left:1022.5px;top:346.7px;font-size:13px;color:#9a9a9a;transform:scaleX(0.892);transform-origin:0 0">B:\System Folders\Docs\Runt</div>
<svg style="left:1190px;top:341px" width="24" height="22" viewBox="0 0 24 22"><path d="M3 7.5 L15 5 L17.5 17.5 L5.5 20Z" fill="none" stroke="#7a86d0" stroke-width="1.1"/><path d="M6 5 L9.5 3 L12 3.5 L13 4.5 L20.5 3 L21 15.5 L17.5 17" fill="none" stroke="#7a86d0" stroke-width="1.1"/></svg>

<!-- settings box -->
<div class="a" style="left:923px;top:382px;width:310.5px;height:197.5px;border:3px solid #000"></div>
<div class="a" style="left:947px;top:390px;width:20.2px;height:19.8px;background:#0f63c8;border-radius:3.5px"></div>
<svg style="left:947px;top:390px" width="20" height="20" viewBox="0 0 20 20"><path d="M4.8 10.3 L8.3 13.6 L15.3 6.6" fill="none" stroke="#fff" stroke-width="1.2"/></svg>
<div class="t" style="left:976.3px;top:394.8px;font-size:14px;color:#222;transform:scaleX(0.973);transform-origin:0 0">Include Title Page</div>
<div class="t" style="left:1090.1px;top:394.8px;font-size:14px;color:#1a6fd0;text-decoration:underline;transform:scaleX(0.983);transform-origin:0 0">(Using Metadata)</div>
<div class="a" style="left:947px;top:438.4px;width:20.2px;height:19.4px;background:#f3f3f3;border:1px solid #8a8a8a;border-radius:3.5px"></div>
<div class="t" style="left:976.3px;top:442.6px;font-size:14px;color:#222">Open the Output Folder after Publishing</div>
<div class="a" style="left:947px;top:486.1px;width:20.2px;height:19.8px;background:#0f63c8;border-radius:3.5px"></div>
<svg style="left:947px;top:486px" width="20" height="20" viewBox="0 0 20 20"><path d="M4.8 10.3 L8.3 13.6 L15.3 6.6" fill="none" stroke="#fff" stroke-width="1.2"/></svg>
<div class="t" style="left:976.3px;top:490.3px;font-size:14px;color:#222;transform:scaleX(0.99);transform-origin:0 0">Open the File after Publishing</div>
<div class="t" style="left:943.3px;top:558.2px;font-size:14px;color:#222;transform:scaleX(0.975);transform-origin:0 0">Image Format</div>
<div class="a" style="left:1038.2px;top:554px;width:19.8px;height:19.8px;border-radius:50%;background:#f0f0f0;border:1px solid #8a8a8a"></div>
<div class="t" style="left:1069px;top:558.2px;font-size:14px;color:#222">jpeg</div>
<div class="a" style="left:1118px;top:554px;width:19.9px;height:19.9px;border-radius:50%;background:#fff;border:5.2px solid #0f63c8"></div>
<div class="t" style="left:1149.8px;top:558.2px;font-size:14px;color:#222">png</div>

<!-- publish -->
<div class="a" style="left:1203.4px;top:800.3px;width:93.6px;height:33px;background:#fff;border:1px solid #dcdcdc;border-radius:4px;box-shadow:0 1px 0 #cfcfcf"></div>
<div class="t" style="left:1203.4px;top:811px;width:93.6px;text-align:center;font-size:13px;font-weight:bold;color:#222">Publish</div>
<div class="a" style="left:1195px;top:791.5px;width:113px;height:49px;border:3px solid #fe0000"></div>

<!-- DIALOG -->
<!-- annotations -->
<svg style="left:0;top:0" width="1922" height="1089" viewBox="0 0 1922 1089">
 <line x1="1007.4" y1="200" x2="1007.4" y2="275" stroke="#000" stroke-width="3"/>
 <path d="M995.2 271 L1021.3 271 L1008 298Z" fill="#000"/>
 <circle cx="1007.4" cy="185.5" r="27.8" fill="#000"/>
 <circle cx="672.2" cy="255.4" r="27.5" fill="#000"/>
 <line x1="1214" y1="352.8" x2="1300" y2="350.5" stroke="#000" stroke-width="3"/>
 <circle cx="1317" cy="350" r="27.5" fill="#000"/>
 <line x1="1232" y1="480.8" x2="1300" y2="478.5" stroke="#000" stroke-width="3"/>
 <circle cx="1317" cy="477.3" r="27.5" fill="#000"/>
 <line x1="1307" y1="815.5" x2="1346" y2="813" stroke="#fe0000" stroke-width="3"/>
 <circle cx="1370.9" cy="812.7" r="25.3" fill="#fff" stroke="#3a4ea0" stroke-width="2.8"/>
 <circle cx="1370.6" cy="797.8" r="2.8" fill="#3a4ea0"/>
 <rect x="1368.4" y="806.5" width="4.4" height="21.5" fill="#3a4ea0"/>
</svg>
<div class="t" style="left:1007.5px;top:175px;width:0;font-size:22px;font-weight:bold;color:#fff;text-align:center"><span style="position:absolute;left:-6.5px">2</span></div>
<div class="t" style="left:665px;top:244.5px;font-size:22px;font-weight:bold;color:#fff">1</div>
<div class="t" style="left:1310.5px;top:339.2px;font-size:22px;font-weight:bold;color:#fff">3</div>
<div class="t" style="left:1310.5px;top:466.5px;font-size:22px;font-weight:bold;color:#fff">4</div>

<!-- ANNOT -->
</body></html>
